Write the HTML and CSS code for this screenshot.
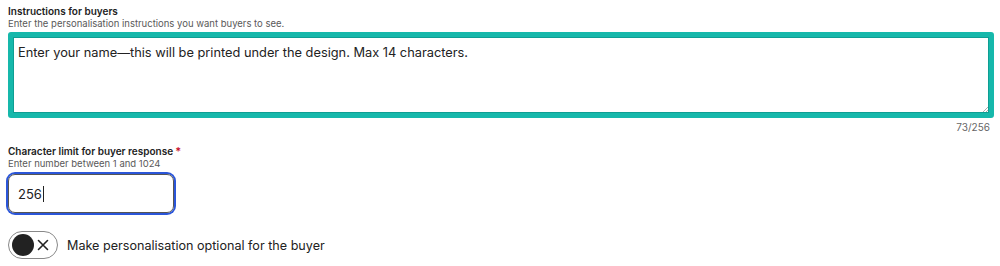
FILE: index.html
```html
<!DOCTYPE html>
<html>
<head>
<meta charset="utf-8">
<link rel="stylesheet" href="styles.css">
</head>
<body>
<div class="field">
  <div class="label">Instructions for buyers</div>
  <div class="hint">Enter the personalisation instructions you want buyers to see.</div>
  <div class="textarea">
    <div class="ta-text">Enter your name—this will be printed under the design. Max 14 characters.</div>
    <svg class="grip" width="6" height="6" viewBox="0 0 6 6"><path d="M1 6 L6 1 M4 6 L6 4" stroke="#999" stroke-width="0.8"/></svg>
  </div>
  <div class="counter">73/256</div>
</div>
<div class="field second">
  <div class="label">Character limit for buyer response<span class="req">*</span></div>
  <div class="hint">Enter number between 1 and 1024</div>
  <div class="input"><span>256</span><span class="caret"></span></div>
</div>
<div class="toggle-row">
  <div class="toggle">
    <span class="knob"></span>
    <svg class="x" width="12" height="12" viewBox="0 0 12 12"><path d="M1.5 1.5 L10.5 10.5 M10.5 1.5 L1.5 10.5" stroke="#222" stroke-width="1.6" stroke-linecap="round"/></svg>
  </div>
  <span class="toggle-label">Make personalisation optional for the buyer</span>
</div>
</body>
</html>
```
FILE: styles.css
```css
body {
  margin: 0;
  padding: 5px 6px 0 8px;
  font-family: Inter, "Liberation Sans", sans-serif;
  color: #222;
  background: #fff;
}
.label {
  font-size: 10px;
  font-weight: 600;
  line-height: 13px;
  color: #222;
}
.req { color: #c8102e; margin-left: 2px; font-size: 11px; }
.hint {
  font-size: 9.5px;
  line-height: 11px;
  color: #595959;
}
.textarea {
  position: relative;
  margin-top: 3px;
  height: 86px;
  box-sizing: border-box;
  border: 5px solid #16b8ab;
  border-radius: 3px;
  box-shadow: inset 0 0 0 1px #0e9e93;
  padding: 7px 5px;
}
.ta-text {
  font-size: 12.8px;
  line-height: 18px;
  color: #222;
}
.grip { position: absolute; right: 1px; bottom: 1px; }
.counter {
  text-align: right;
  font-size: 10px;
  color: #666;
  line-height: 12px;
  margin-top: 3px;
  padding-right: 4px;
}
.second { margin-top: 12px; }
.input {
  margin-top: 5px;
  width: 166px;
  height: 39px;
  box-sizing: border-box;
  border: 1px solid #555;
  border-radius: 7px;
  box-shadow: 0 0 0 2px #2b56d9;
  display: flex;
  align-items: center;
  padding-left: 9px;
  font-size: 13px;
  color: #222;
}
.caret {
  display: inline-block;
  width: 1px;
  height: 16px;
  background: #222;
  margin-left: 1px;
}
.toggle-row {
  margin-top: 18px;
  display: flex;
  align-items: center;
  gap: 9px;
}
.toggle {
  width: 50px;
  height: 28px;
  box-sizing: border-box;
  border: 1px solid #888;
  border-radius: 14px;
  display: flex;
  align-items: center;
  padding-left: 3px;
  gap: 3px;
}
.knob {
  width: 22px;
  height: 22px;
  border-radius: 50%;
  background: #222;
}
.toggle-label {
  font-size: 12.6px;
  color: #222;
}
```
